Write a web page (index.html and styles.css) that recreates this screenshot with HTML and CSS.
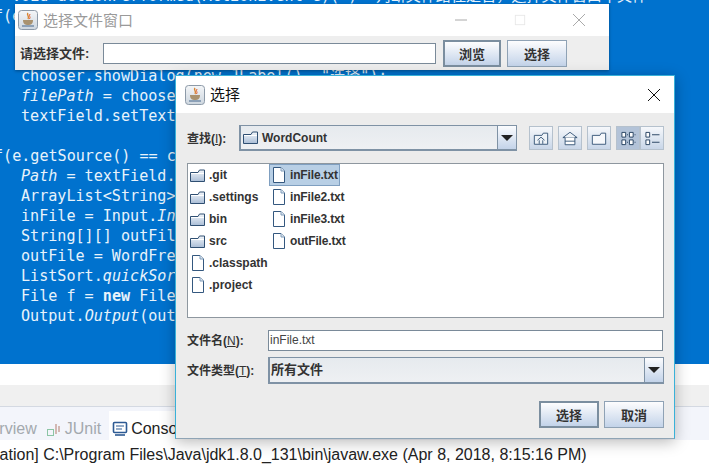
FILE: index.html
```html
<!DOCTYPE html>
<html lang="zh">
<head>
<meta charset="utf-8">
<title>选择</title>
<link rel="stylesheet" href="styles.css">
</head>
<body>
<svg class="defs" width="0" height="0" aria-hidden="true">
  <defs>
    <linearGradient id="fg" x1="0" y1="0" x2="0" y2="1"><stop offset="0" stop-color="#f4f7fb"/><stop offset="1" stop-color="#a9bdd6"/></linearGradient>
    <linearGradient id="ig" x1="0" y1="0" x2="0" y2="1"><stop offset="0" stop-color="#f4f6f8"/><stop offset="1" stop-color="#cdd6df"/></linearGradient>
    <symbol id="folder" viewBox="0 0 17 15">
      <path d="M1.5 4.5 H9 L10.5 2 H15.5 V13.5 H1.5 Z" fill="url(#fg)" stroke="#2f4f72"/>
      <path d="M2 5.5 H15" stroke="#fff"/>
    </symbol>
    <symbol id="file" viewBox="0 0 14 18">
      <path d="M1.5 1.5 H9 L12.5 5 V16.5 H1.5 Z" fill="#fff" stroke="#34587f"/>
      <path d="M9 1.5 V5 H12.5" fill="#dfe8f2" stroke="#7d9ab9"/>
    </symbol>
    <symbol id="java" viewBox="0 0 20 20">
      <rect x="0.5" y="0.5" width="19" height="19" rx="3" fill="url(#ig)" stroke="#8d9aa8"/>
      <path d="M10 3 C8 5 12 6 10 9" fill="none" stroke="#d9822b" stroke-width="1.4"/>
      <path d="M12 4 C10.5 6 13 7 11.5 9" fill="none" stroke="#e25b2b"/>
      <path d="M5 10 H15 C15 14 13 15 10 15 C7 15 5 14 5 10 Z" fill="#a9926f"/>
      <path d="M4 16 H16" stroke="#6d87a4" stroke-width="1.4"/>
    </symbol>
  </defs>
</svg>

<main class="ide">
  <section class="editor">
    <div class="code">
      <div class="ln l0">void actionPerformed(ActionEvent e)( )  判断文件路径是否，选择文件窗口中文件</div>
      <div class="ln l1">f(e.getSource() == b</div>
      <div class="ln"></div>
      <div class="ln"></div>
      <div class="ln ind">chooser.showDialog(new JLabel(), "选择");</div>
      <div class="ln ind"><i>filePath</i> = chooser.getSelectedFile();</div>
      <div class="ln ind">textField.setText(filePath.getPath());</div>
      <div class="ln"></div>
      <div class="ln l1">f(e.getSource() == c</div>
      <div class="ln ind"><i>Path</i> = textField.getText();</div>
      <div class="ln ind">ArrayList&lt;String&gt; inFile;</div>
      <div class="ln ind">inFile = Input.<i>Input</i>(Path);</div>
      <div class="ln ind">String[][] outFile;</div>
      <div class="ln ind">outFile = WordFreq.count(inFile);</div>
      <div class="ln ind">ListSort.<i>quickSort</i>(outFile);</div>
      <div class="ln ind">File f = <b>new</b> File(Path);</div>
      <div class="ln ind">Output.<i>Output</i>(outFile, f);</div>
    </div>
  </section>
  <div class="strip-white"></div>
  <div class="strip-gray"></div>
  <div class="tabs">
    <span class="tab dim">Overview</span>
    <span class="tab dim junit">
      <svg class="tab-icon" viewBox="0 0 16 16"><rect x="1.5" y="8.5" width="6" height="6" fill="none" stroke="#8cc5a5"/><path d="M10 13 V3 M13 11 V5" stroke="#c9a49c" stroke-width="1.5"/></svg>
      JUnit
    </span>
    <span class="tab active">
      <svg class="tab-icon" viewBox="0 0 16 16"><rect x="1.5" y="1.5" width="13" height="10" rx="1" fill="#fff" stroke="#2d5a93" stroke-width="1.6"/><path d="M4 5 H12 M4 8 H10" stroke="#2d5a93"/><path d="M3 14 H13" stroke="#2d5a93" stroke-width="1.6"/></svg>
      Console
    </span>
  </div>
  <div class="console">Application] C:\Program Files\Java\jdk1.8.0_131\bin\javaw.exe (Apr 8, 2018, 8:15:16 PM)</div>
</main>

<div class="win win-main">
  <header class="titlebar titlebar-main">
    <svg class="app-icon"><use href="#java"/></svg>
    <span class="title dim-title">选择文件窗口</span>
    <span class="controls">
      <svg viewBox="0 0 14 14" class="ctl"><path d="M1 7 H13" stroke="#aaa"/></svg>
      <svg viewBox="0 0 14 14" class="ctl ctl-max"><rect x="1.5" y="1.5" width="11" height="11" fill="none" stroke="#e6e6e6"/></svg>
      <svg viewBox="0 0 14 14" class="ctl"><path d="M1 1 L13 13 M13 1 L1 13" stroke="#aaa"/></svg>
    </span>
  </header>
  <div class="main-body">
    <label class="zh-label main-label">请选择文件:</label>
    <div class="input main-input"></div>
    <button class="btn btn-focus main-btn">浏览</button>
    <button class="btn main-btn">选择</button>
  </div>
</div>

<div class="win win-dialog">
  <header class="titlebar titlebar-dialog">
    <svg class="app-icon"><use href="#java"/></svg>
    <span class="title">选择</span>
    <svg viewBox="0 0 14 14" class="ctl ctl-close"><path d="M1 1 L13 13 M13 1 L1 13" stroke="#111"/></svg>
  </header>
  <div class="dialog-body">
    <div class="look-row">
      <label class="zh-label look-label">查找(<u>I</u>):</label>
      <div class="combo look-combo">
        <span class="combo-value look-value">
          <svg class="fi-folder"><use href="#folder"/></svg>
          <b>WordCount</b>
        </span>
        <span class="combo-arrow"></span>
      </div>
      <div class="tools">
        <button class="tool"><svg viewBox="0 0 18 16"><path d="M1.5 4.5 H10 L11.5 2 H16.5 V14.5 H1.5 Z" fill="#eef3f8" stroke="#2f4f72"/><path d="M5 10 L9 6.5 L13 10 M7 10 V14 M11 10 V14" fill="none" stroke="#2f4f72"/></svg></button>
        <button class="tool"><svg viewBox="0 0 18 16"><path d="M1 7 L9 1 L17 7 Z" fill="#eef3f8" stroke="#2f4f72"/><path d="M3.5 7 V15 H14.5 V7 M3.5 11 H14.5" fill="#fff" stroke="#2f4f72"/></svg></button>
        <button class="tool"><svg viewBox="0 0 18 16"><path d="M1.5 4.5 H10 L11.5 2 H16.5 V14.5 H1.5 Z" fill="#f6f8fb" stroke="#2f4f72"/></svg></button>
        <div class="tool-pair">
          <button class="tool tool-on"><svg viewBox="0 0 16 16"><path d="M1.5 1.5 H5.5 V6.5 H1.5 Z M9.5 1.5 H13.5 V6.5 H9.5 Z M1.5 9.5 H5.5 V14.5 H1.5 Z M9.5 9.5 H13.5 V14.5 H9.5 Z" fill="#fff" stroke="#24405f"/><path d="M7 4 H8 M7 12 H8 M15 4 H16 M15 12 H16" stroke="#24405f"/></svg></button>
          <button class="tool"><svg viewBox="0 0 16 16"><path d="M1.5 1.5 H5.5 V6.5 H1.5 Z M1.5 9.5 H5.5 V14.5 H1.5 Z" fill="#fff" stroke="#24405f"/><path d="M8 4 H16 M8 12 H16" stroke="#24405f"/></svg></button>
        </div>
      </div>
    </div>

    <div class="file-list">
      <ul class="col col-1">
        <li class="item"><svg class="fi-folder"><use href="#folder"/></svg><span>.git</span></li>
        <li class="item"><svg class="fi-folder"><use href="#folder"/></svg><span>.settings</span></li>
        <li class="item"><svg class="fi-folder"><use href="#folder"/></svg><span>bin</span></li>
        <li class="item"><svg class="fi-folder"><use href="#folder"/></svg><span>src</span></li>
        <li class="item"><svg class="fi-file"><use href="#file"/></svg><span>.classpath</span></li>
        <li class="item"><svg class="fi-file"><use href="#file"/></svg><span>.project</span></li>
      </ul>
      <ul class="col col-2">
        <li class="item selected"><svg class="fi-file"><use href="#file"/></svg><span>inFile.txt</span></li>
        <li class="item"><svg class="fi-file"><use href="#file"/></svg><span>inFile2.txt</span></li>
        <li class="item"><svg class="fi-file"><use href="#file"/></svg><span>inFile3.txt</span></li>
        <li class="item"><svg class="fi-file"><use href="#file"/></svg><span>outFile.txt</span></li>
      </ul>
    </div>

    <div class="form-row name-row">
      <label class="zh-label form-label">文件名(<u>N</u>):</label>
      <div class="input name-input">inFile.txt</div>
    </div>
    <div class="form-row type-row">
      <label class="zh-label form-label">文件类型(<u>T</u>):</label>
      <div class="combo type-combo">
        <span class="combo-value type-value">所有文件</span>
        <span class="combo-arrow"></span>
      </div>
    </div>
    <div class="actions">
      <button class="btn btn-focus act-btn">选择</button>
      <button class="btn act-btn">取消</button>
    </div>
  </div>
</div>
</body>
</html>
```

FILE: styles.css
```css
* { box-sizing: border-box; }
html, body { margin: 0; padding: 0; }
body {
  width: 709px;
  height: 465px;
  overflow: hidden;
  position: relative;
  background: #fff;
  font-family: "Liberation Sans", "Noto Sans CJK SC", sans-serif;
}
.defs { position: absolute; }

/* IDE behind the windows */
.ide { display: flex; flex-direction: column; height: 465px; }
.editor { height: 365px; background: #0072ce; overflow: hidden; }
.code {
  margin-top: -14px;
  font: 15.1px/20px "DejaVu Sans Mono", "Noto Sans CJK SC", monospace;
  color: #e8f3fb;
}
.ln { height: 20px; white-space: pre; }
.ln.l0 { padding-left: 12px; }
.ln.l1 { margin-left: -6px; }
.ln.ind { padding-left: 21px; }
.strip-white { height: 21px; background: #fff; }
.strip-gray { height: 22px; background: #f0f0f0; border-bottom: 1px solid #d4d9e2; }
.tabs {
  height: 33px;
  display: flex;
  align-items: flex-end;
  background: #f3f5fb;
  font-size: 16px;
  color: #222;
  margin-left: -30px;
}
.tab { display: flex; align-items: center; gap: 3px; height: 29px; padding: 6px 8px 0 0; white-space: nowrap; }
.tab.dim { color: #a3a9ae; }
.tab.junit { margin-left: 1px; }
.tab.active { background: #fff; padding-left: 3px; color: #222; }
.tab-icon { width: 16px; height: 16px; }
.console { flex: 1; margin-left: -44px; font-size: 16px; line-height: 20px; color: #222; white-space: nowrap; padding-top: 5px; }

/* Swing windows on the desktop */
.win { position: absolute; background: #eeeeee; }
.win-main { left: 15px; top: 4px; width: 594px; height: 66px; box-shadow: 0 1px 3px rgba(0, 0, 0, .35); }
.win-dialog {
  left: 175px; top: 75px; width: 500px; height: 364px;
  border: 1px solid #39b1d8;
  border-bottom-color: #8fa4b5;
  box-shadow: 0 3px 14px rgba(0, 0, 0, .28);
  background: #ececec;
}
.titlebar { display: flex; align-items: center; background: #fff; }
.titlebar-main { height: 32px; padding-left: 3px; }
.titlebar-dialog { height: 37px; padding: 0 13px 0 9px; }
.app-icon { width: 20px; height: 20px; flex: none; }
.title { margin-left: 5px; font-size: 15px; color: #111; padding-bottom: 2px; }
.dim-title { color: #9a9a9a; }
.controls { margin-left: auto; display: flex; align-items: center; gap: 46px; padding-right: 23px; }
.ctl { width: 14px; height: 14px; display: block; }
.ctl-max { width: 12px; height: 12px; }
.ctl-close { margin-left: auto; }

.zh-label { font-size: 12px; font-weight: 700; color: #333; white-space: nowrap; padding-bottom: 2px; }
.zh-label u { font-weight: 400; }
.input { background: #fff; border: 1px solid #7a8a99; }
.btn {
  font: 700 13px "Noto Sans CJK SC", sans-serif;
  color: #333;
  background: linear-gradient(#fdfdfe, #c3d3e9);
  border: 1px solid #8fa2b5;
  padding: 0;
  display: flex; align-items: center; justify-content: center;
}
.btn-focus { border: 2px solid #7b8e9f; }

.main-body { height: 34px; display: flex; align-items: center; padding-left: 5px; }
.main-label { width: 83px; font-size: 13px; }
.main-input { width: 333px; height: 21px; margin-right: 7px; }
.main-btn { width: 58px; height: 27px; margin-right: 6px; }
.main-btn + .main-btn { width: 60px; }

.dialog-body { padding: 0 10px 0 11px; }
.look-row { height: 50px; display: flex; align-items: center; }
.look-label { width: 52px; }
.combo {
  display: flex;
  background: linear-gradient(#e6eaee, #eef0f3);
  border: 1px solid #7f92a5;
  border-width: 1px 1px 2px 2px;
}
.look-combo { width: 278px; height: 26px; }
.combo-value { flex: 1; display: flex; align-items: center; gap: 3px; font-size: 12px; color: #333; }
.combo-arrow {
  flex: none;
  width: 19px;
  border-left: 1px solid #7f92a5;
  background: linear-gradient(#fbfcfe, #c3d3e9);
  position: relative;
}
.combo-arrow::after {
  content: "";
  position: absolute;
  left: 3px; top: 9px;
  border: 6px solid transparent;
  border-top: 6px solid #222;
  border-bottom: 0;
}
.tools { display: flex; gap: 5px; margin-left: 12px; }
.tool-pair { display: flex; }
.tool {
  width: 24px; height: 24px; padding: 3px;
  background: linear-gradient(#f6f8fb, #c8d6e8);
  border: 1px solid #b5c1cd;
  display: flex; align-items: center; justify-content: center;
}
.tool svg { width: 17px; height: 15px; }
.tool-on { background: #b3c3d8; }

.file-list {
  height: 155px;
  background: #fff;
  border: 1px solid #8e979f;
  display: flex;
  font-size: 12px;
  font-weight: 700;
  color: #333;
}
.col { list-style: none; margin: 0; padding: 0; }
.col-1 { width: 81px; }
.col-2 { letter-spacing: -.15px; }
.item { height: 22px; display: flex; align-items: center; gap: 3px; white-space: nowrap; }
.fi-folder { width: 17px; height: 15px; flex: none; margin-left: 1px; }
.fi-file { width: 14px; height: 18px; flex: none; margin: 0 1px 0 3px; }
.selected { width: fit-content; padding-right: 1px; background: #b8cfe5; border: 1px solid #7f9fc0; }
.selected .fi-file { margin-left: 2px; }

.form-row { display: flex; align-items: center; }
.form-label { width: 81px; }
.name-row { margin-top: 11px; height: 22px; }
.name-input { width: 395px; height: 21px; font-size: 12px; color: #444; line-height: 19px; padding-left: 1px; }
.type-row { margin-top: 5px; height: 28px; }
.type-combo { width: 396px; height: 27px; }
.type-value { font-size: 13px; font-weight: 700; padding: 0 0 2px 1px; }
.actions { display: flex; justify-content: flex-end; gap: 5px; margin-top: 17px; }
.act-btn { width: 60px; height: 27px; }
```
